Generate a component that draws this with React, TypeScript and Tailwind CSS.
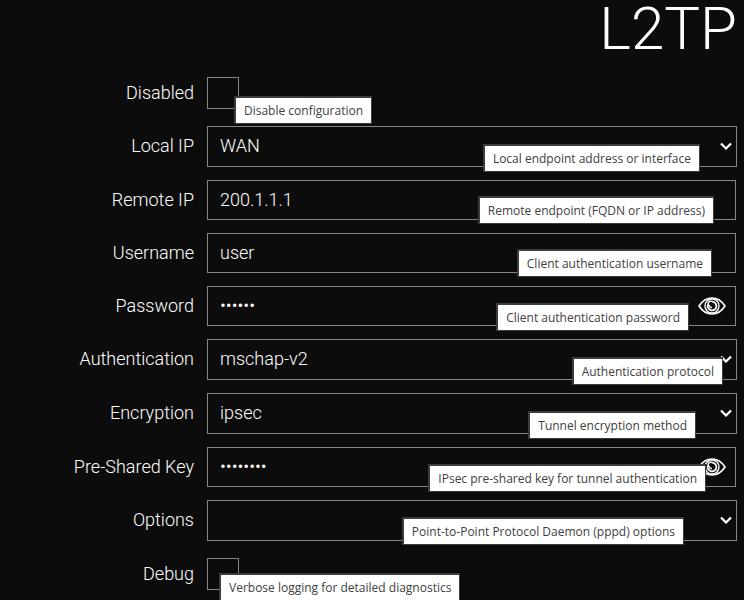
import { useState } from 'react';
import clsx from 'clsx';

type FieldType = 'checkbox' | 'select' | 'text' | 'password';

interface Field {
  id: string;
  label: string;
  type: FieldType;
  value?: string;
  hint: string;
  hintClass: string;
}

const FIELDS: Field[] = [
  { id: 'disabled', label: 'Disabled', type: 'checkbox', hint: 'Disable configuration', hintClass: 'left-[27px] top-[23px]' },
  { id: 'local-ip', label: 'Local IP', type: 'select', value: 'WAN', hint: 'Local endpoint address or interface', hintClass: 'right-[37px] top-[18px]' },
  { id: 'remote-ip', label: 'Remote IP', type: 'text', value: '200.1.1.1', hint: 'Remote endpoint (FQDN or IP address)', hintClass: 'right-[23px] top-4' },
  { id: 'username', label: 'Username', type: 'text', value: 'user', hint: 'Client authentication username', hintClass: 'right-[25px] top-4' },
  { id: 'password', label: 'Password', type: 'password', value: 'secret', hint: 'Client authentication password', hintClass: 'right-12 top-[17px]' },
  { id: 'authentication', label: 'Authentication', type: 'select', value: 'mschap-v2', hint: 'Authentication protocol', hintClass: 'right-[14px] top-[18px]' },
  { id: 'encryption', label: 'Encryption', type: 'select', value: 'ipsec', hint: 'Tunnel encryption method', hintClass: 'right-[41px] top-[18px]' },
  { id: 'psk', label: 'Pre-Shared Key', type: 'password', value: 'topsecre', hint: 'IPsec pre-shared key for tunnel authentication', hintClass: 'right-[31px] top-[17px]' },
  { id: 'options', label: 'Options', type: 'select', value: '', hint: 'Point-to-Point Protocol Daemon (pppd) options', hintClass: 'right-[53px] top-[17px]' },
  { id: 'debug', label: 'Debug', type: 'checkbox', hint: 'Verbose logging for detailed diagnostics', hintClass: 'left-3 top-[19px]' }
];

const EyeIcon = () => (
  <svg viewBox="0 0 28 18" className="h-[18px] w-7" fill="none" stroke="currentColor" strokeWidth="1.6">
    <path d="M1 9C4.500 3.600 9 1 14 1s9.500 2.600 13 8c-3.500 5.400-8 8-13 8S4.500 14.400 1 9z" />
    <circle cx="14" cy="9" r="7" strokeWidth="1.4" />
    <path d="M14 4.600A4.400 4.400 0 1 1 9.800 7.800" strokeWidth="1.800" />
    <path d="M14 4.600a2.300 2.300 0 0 0-2.600 4.200 2.300 2.300 0 0 0 2.600 1.700" strokeWidth="1.400" />
  </svg>
);

const ChevronIcon = () => (
  <svg viewBox="0 0 12 8" className="h-2 w-3" fill="none" stroke="currentColor" strokeWidth="2.2">
    <path d="M1 1.500l5 5 5-5" />
  </svg>
);

const BOX = 'block w-full rounded-none border border-[#868686] bg-transparent px-3 pb-px text-lg font-light text-white outline-none';

const Control = ({ field }: { field: Field }) => {
  const [visible, setVisible] = useState(false);

  if (field.type === 'checkbox') {
    return (
      <div className="flex h-10 items-center">
        <input
          id={field.id}
          type="checkbox"
          className="size-8 appearance-none border border-[#868686] checked:bg-[#868686]"
        />
      </div>
    );
  }

  if (field.type === 'select') {
    return (
      <>
        <select id={field.id} defaultValue={field.value} className={clsx(BOX, 'h-[41px] appearance-none')}>
          <option value={field.value}>{field.value}</option>
        </select>
        <span className="pointer-events-none absolute right-[5px] top-4">
          <ChevronIcon />
        </span>
      </>
    );
  }

  return (
    <div className="pr-px">
      <input
        id={field.id}
        type={field.type === 'password' && !visible ? 'password' : 'text'}
        defaultValue={field.value}
        autoComplete="off"
        className={clsx(BOX, 'h-10')}
      />
      {field.type === 'password' && (
        <button
          type="button"
          aria-label={`Show ${field.label}`}
          onClick={() => setVisible((prev) => !prev)}
          className="absolute right-[11px] top-[11px]"
        >
          <EyeIcon />
        </button>
      )}
    </div>
  );
};

const FieldRow = ({ field }: { field: Field }) => (
  <div className="flex">
    <label htmlFor={field.id} className="w-[194px] shrink-0 text-right text-lg font-light leading-[39px]">
      {field.label}
    </label>
    <div className="relative ml-[13px] min-w-0 flex-1">
      <Control field={field} />
      <span
        role="tooltip"
        className={clsx(
          "absolute whitespace-nowrap border-b border-l-2 border-r border-t-2 border-[#3c3c3c] bg-white px-2 font-['Open_Sans','Noto_Sans',sans-serif] text-xs leading-[25px] text-[#404040]",
          field.hintClass
        )}
      >
        {field.hint}
      </span>
    </div>
  </div>
);

export default function App() {
  return (
    <main className="min-h-screen bg-[#0c0c0c] pr-[7px] font-[Roboto,sans-serif] text-white">
      <h1 className="h-[73px] text-right text-[60px] font-light leading-[58px]">L2TP</h1>
      <form className="flex flex-col gap-[13px]">
        {FIELDS.map((field) => (
          <FieldRow key={field.id} field={field} />
        ))}
      </form>
    </main>
  );
}
